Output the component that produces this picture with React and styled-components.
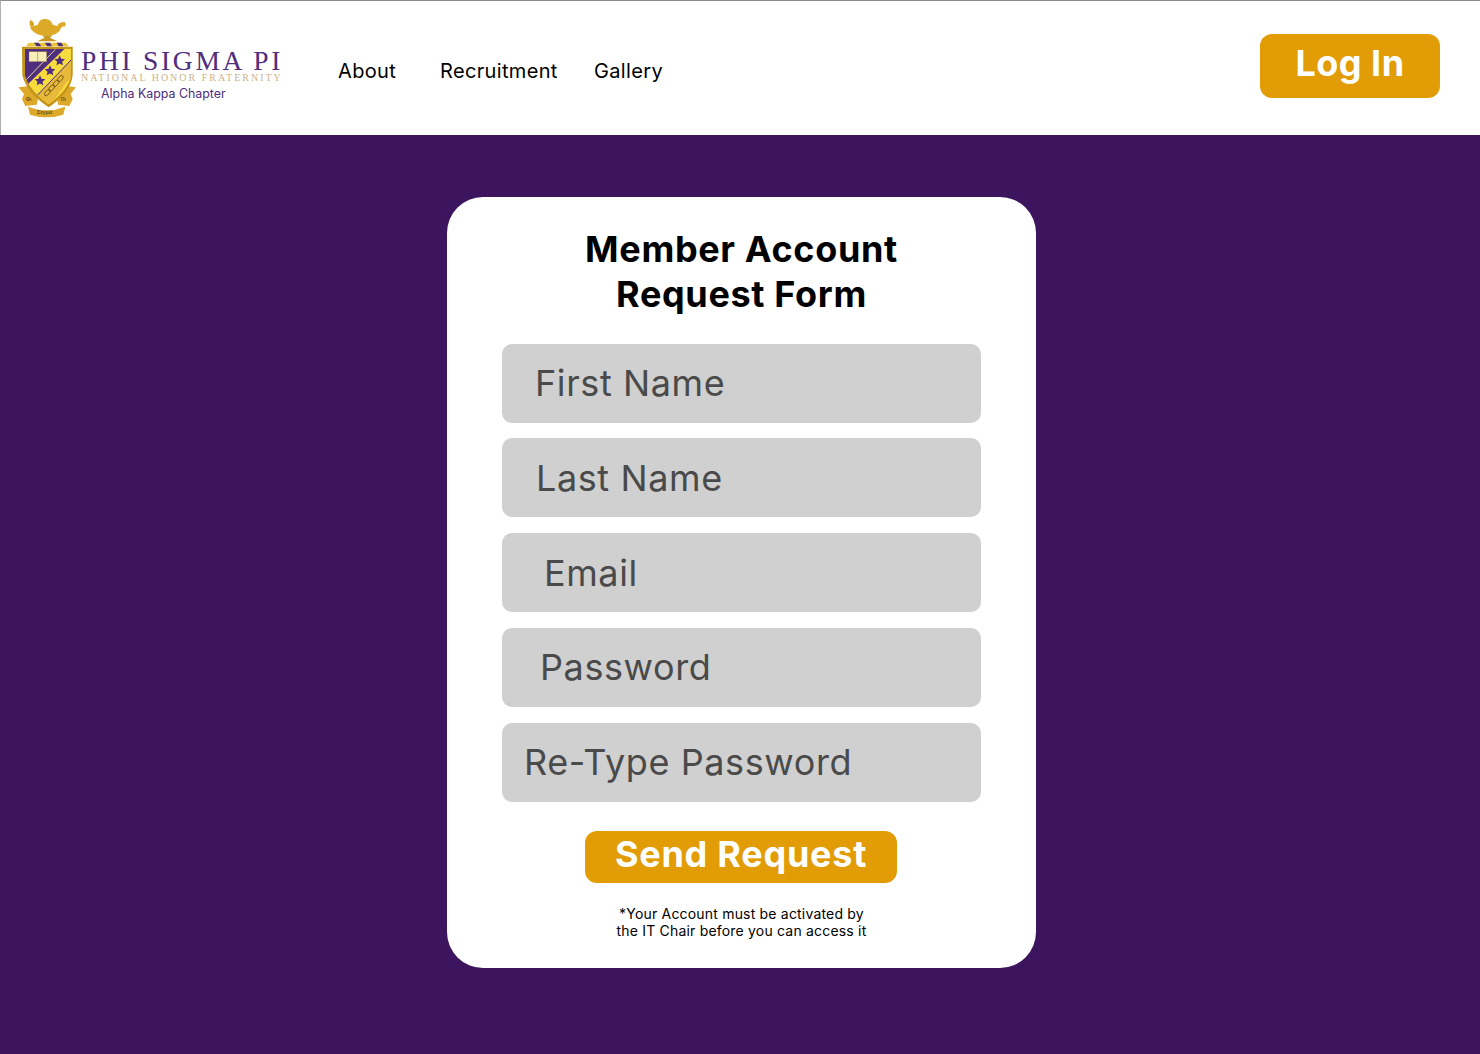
import React from 'react';
import styled, { createGlobalStyle } from 'styled-components';

const GlobalStyle = createGlobalStyle`
  html, body { margin: 0; padding: 0; }
  body { font-family: Inter, "Liberation Sans", sans-serif; background: #3d155f; }
  * { box-sizing: border-box; }
`;

const Pagina = styled.div`
  width: 1480px;
  height: 1054px;
  display: flex;
  flex-direction: column;
  overflow: hidden;
`;

const Cabecera = styled.header`
  height: 135px;
  flex: none;
  display: flex;
  align-items: center;
  background: #fff;
  border-top: 1px solid #8c8c8c;
  border-left: 1px solid #b0b0b0;
  padding: 0 40px 0 16px;
`;

const LogoBloque = styled.a`
  display: flex;
  align-items: flex-start;
  gap: 4px;
  width: 321px;
  flex: none;
  height: 101px;
  margin-top: -2px;
`;

const LogoTextos = styled.div`
  display: flex;
  flex-direction: column;
  padding-top: 32px;
`;

const LogoNombre = styled.span`
  font-family: "Liberation Serif", serif;
  font-size: 27.5px;
  line-height: 23px;
  letter-spacing: 2.7px;
  color: #4f2d7f;
  white-space: nowrap;
`;

const LogoLema = styled.span`
  font-family: "Liberation Serif", serif;
  font-size: 10px;
  line-height: 11px;
  letter-spacing: 2px;
  color: #cdb386;
  white-space: nowrap;
`;

const LogoCapitulo = styled.span`
  font-size: 12.4px;
  line-height: 15px;
  margin: 3px 0 0 20px;
  color: #4f2d7f;
  white-space: nowrap;
`;

const Nav = styled.nav`
  display: flex;
  align-items: center;
  font-size: 20px;
  letter-spacing: 0.34px;
  color: #000;
  padding-top: 5px;
`;

const NavLink = styled.a`
  width: ${p => p.$ancho}px;
  white-space: nowrap;
`;

const BotonLogin = styled.button`
  margin-left: auto;
  width: 180px;
  height: 64px;
  margin-top: -4px;
  border: none;
  border-radius: 12px;
  background: #e29c06;
  color: #fff;
  font-family: inherit;
  font-size: 36px;
  font-weight: 700;
  letter-spacing: 0.5px;
  padding: 0 0 6px;
`;

const Principal = styled.main`
  flex: 1;
  background: #3d155f;
  padding: 62px 0 0 447px;
`;

const Tarjeta = styled.form`
  width: 589px;
  height: 771px;
  background: #fff;
  border-radius: 36px;
  padding: 30px 55px 0;
  display: flex;
  flex-direction: column;
  align-items: center;
`;

const Titulo = styled.h1`
  margin: 0 0 26.7px;
  font-size: 36px;
  line-height: 45px;
  font-weight: 700;
  letter-spacing: 0.65px;
  color: #000;
  text-align: center;
`;

const Campos = styled.div`
  width: 479px;
  display: flex;
  flex-direction: column;
  gap: 15.72px;
`;

const Campo = styled.input`
  width: 100%;
  height: 79px;
  border: none;
  border-radius: 10px;
  background: #d0d0d0;
  padding: 0 0 0 ${p => p.$sangria}px;
  font-family: inherit;
  font-size: 36px;
  letter-spacing: 0.6px;
  color: #4a4a4a;
  outline: none;
  &::placeholder {
    color: #4a4a4a;
    opacity: 1;
  }
`;

const BotonEnviar = styled.button`
  margin: 29.4px 1px 0 0;
  width: 312px;
  height: 52px;
  border: none;
  border-radius: 12px;
  background: #e29c06;
  color: #fff;
  font-family: inherit;
  font-size: 36px;
  font-weight: 700;
  letter-spacing: 0.75px;
  padding: 0 0 6px;
  flex: none;
`;

const Aviso = styled.p`
  margin: 22px 0 0;
  font-size: 14px;
  line-height: 17px;
  letter-spacing: 0.19px;
  color: #000;
  text-align: center;
`;

const ESTRELLA = 'l4.6 10.4 11.4 1 -8.6 7.6 2.6 11 -10 -5.8 -10 5.8 2.6 -11 -8.6 -7.6 11.4 -1 z';

const Escudo = () => (
  <svg width="60" height="101" viewBox="51 51 180 303" style={{ flex: 'none' }}>
    <defs>
      <clipPath id="escudoClip">
        <path d="M74 146 L213 146 L213 226 Q206 270 146 313 Q86 270 75 226 Z" />
      </clipPath>
    </defs>
    {/* lampara */}
    <path d="M91 60 Q104 66 102 76 Q98 82 92 80 Q86 72 91 60 Z" fill="#d9a520" />
    <path d="M90 82 L114 74 Q116 58 135 56 Q154 58 158 74 L172 78 Q176 66 194 66 Q200 72 194 80 Q184 78 182 86 Q176 102 152 106 L122 106 Q98 100 90 82 Z" fill="#dcaa26" />
    <path d="M126 106 L158 106 L150 113 L172 124 L112 124 L134 113 Z" fill="#c9971c" />
    {/* corona */}
    <path d="M86 128 L198 128 L206 139 L78 139 Z" fill="#e8c53a" />
    <path d="M102 128 L116 128 L124 139 L110 139 Z M134 128 L150 128 L156 139 L142 139 Z M170 128 L184 128 L190 139 L176 139 Z" fill="#4f2d7f" />
    {/* cintas */}
    <path d="M55 262 L88 258 L114 296 L110 314 L76 318 L66 298 L72 282 Z" fill="#dca92a" />
    <path d="M228 262 L198 258 L172 296 L174 314 L208 318 L218 298 L212 282 Z" fill="#dca92a" />
    <path d="M84 320 Q140 342 196 320 L190 344 Q140 360 90 344 Z" fill="#dca92a" />
    <text x="78" y="304" fontFamily="Liberation Serif, serif" fontSize="16" fill="#4a2a10">Φι</text>
    <text x="182" y="304" fontFamily="Liberation Serif, serif" fontSize="16" fill="#4a2a10">Πι</text>
    <text x="110" y="343" fontFamily="Liberation Serif, serif" fontSize="20" fill="#4a2a10">Σιγμα</text>
    {/* escudo */}
    <path d="M66 140 L218 140 L218 226 Q212 278 146 322 Q80 278 67 226 Z" fill="#c49418" />
    <g clipPath="url(#escudoClip)">
      <rect x="60" y="140" width="170" height="190" fill="#f8dc3e" />
      <path d="M74 146 L194 146 L74 262 Z" fill="#4f2d7f" />
      <path d="M213 180 L213 230 L150 316 L112 286 Z" fill="#e6b93a" />
      <path d="M213 180 L112 286" stroke="#4f2d7f" strokeWidth="3" />
      <path d="M78 240 L166 148" stroke="#e8d28a" strokeWidth="3" />
      <rect x="87" y="155" width="53" height="30" fill="#f7eeb8" stroke="#8a6a20" strokeWidth="1" />
      <path d="M113 155 V185" stroke="#8a6a20" strokeWidth="1.5" />
      <path d={`M179 166 ${ESTRELLA}`} fill="#4f2d7f" />
      <path d={`M150 196 ${ESTRELLA}`} fill="#4f2d7f" />
      <path d={`M120 226 ${ESTRELLA}`} fill="#4f2d7f" />
      <g fill="none" stroke="#6b4a14" strokeWidth="2.4">
        <ellipse cx="142" cy="278" rx="11" ry="6" transform="rotate(-48 142 278)" />
        <ellipse cx="155" cy="264" rx="11" ry="6" transform="rotate(-48 155 264)" />
        <ellipse cx="168" cy="250" rx="11" ry="6" transform="rotate(-48 168 250)" />
        <ellipse cx="181" cy="236" rx="11" ry="6" transform="rotate(-48 181 236)" />
      </g>
    </g>
  </svg>
);

const App = () => {
  const campos = [
    { texto: 'First Name', sangria: 33, tipo: 'text' },
    { texto: 'Last Name', sangria: 34, tipo: 'text' },
    { texto: 'Email', sangria: 42, tipo: 'email' },
    { texto: 'Password', sangria: 38, tipo: 'password' },
    { texto: 'Re-Type Password', sangria: 22, tipo: 'password' },
  ];

  return (
    <Pagina>
      <GlobalStyle />
      <Cabecera>
        <LogoBloque>
          <Escudo />
          <LogoTextos>
            <LogoNombre>PHI SIGMA PI</LogoNombre>
            <LogoLema>NATIONAL HONOR FRATERNITY</LogoLema>
            <LogoCapitulo>Alpha Kappa Chapter</LogoCapitulo>
          </LogoTextos>
        </LogoBloque>
        <Nav>
          <NavLink $ancho={102}>About</NavLink>
          <NavLink $ancho={154}>Recruitment</NavLink>
          <NavLink $ancho={70}>Gallery</NavLink>
        </Nav>
        <BotonLogin type="button">Log In</BotonLogin>
      </Cabecera>
      <Principal>
        <Tarjeta onSubmit={e => e.preventDefault()}>
          <Titulo>
            Member Account
            <br />
            Request Form
          </Titulo>
          <Campos>
            {campos.map(c => (
              <Campo key={c.texto} type={c.tipo} placeholder={c.texto} $sangria={c.sangria} />
            ))}
          </Campos>
          <BotonEnviar type="submit">Send Request</BotonEnviar>
          <Aviso>
            *Your Account must be activated by
            <br />
            the IT Chair before you can access it
          </Aviso>
        </Tarjeta>
      </Principal>
    </Pagina>
  );
};

export default App;
